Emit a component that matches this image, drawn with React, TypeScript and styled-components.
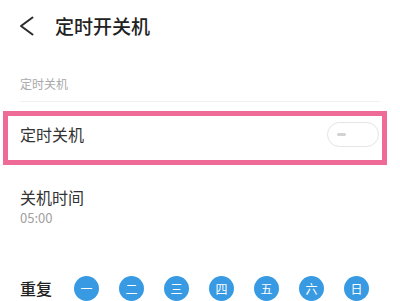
import React from "react";
import styled, { createGlobalStyle } from "styled-components";

const Global = createGlobalStyle`
  html, body { margin: 0; padding: 0; background: #ffffff; }
  body { font-family: "Noto Sans CJK SC", "Noto Sans", Roboto, sans-serif; }
`;

const Page = styled.div`
  width: 400px;
  height: 301px;
  overflow: hidden;
  background: #fff;
  display: flex;
  flex-direction: column;
`;

const Header = styled.div`
  height: 52px;
  display: flex;
  align-items: center;
  padding-left: 19px;
`;

const BackIcon = styled.svg`
  width: 16px;
  height: 20px;
  flex: none;
`;

const Title = styled.div`
  margin-left: 20px;
  font-size: 19px;
  line-height: 26px;
  font-weight: 500;
  color: #222;
`;

const SectionLabel = styled.div`
  margin: 25px 0 0 20px;
  font-size: 12px;
  line-height: 16px;
  color: #aaa;
`;

const Divider = styled.div`
  margin: 9px 20px 0 20px;
  height: 1px;
  background: #f0f0f0;
`;

const Highlight = styled.div`
  margin: 9px 0 0 3px;
  width: 384px;
  height: 55px;
  box-sizing: border-box;
  border: 5px solid #ef6b97;
  display: flex;
  align-items: center;
  justify-content: space-between;
  padding: 0 3px 8px 12px;
`;

const RowTitle = styled.div`
  font-size: 16px;
  line-height: 22px;
  color: #333;
`;

const Toggle = styled.div`
  width: 52px;
  height: 25px;
  box-sizing: border-box;
  border: 1.5px solid #e4e4e4;
  border-radius: 13px;
  display: flex;
  align-items: center;
  padding-left: 9px;
`;

const ToggleDash = styled.div`
  width: 9px;
  height: 3px;
  border-radius: 2px;
  background: #d2d2d2;
`;

const TimeRow = styled.div`
  margin: 21px 0 0 20px;
  display: flex;
  flex-direction: column;
  gap: 2px;
`;

const SubText = styled.div`
  font-size: 13px;
  line-height: 16px;
  color: #a0a0a0;
`;

const RepeatRow = styled.div`
  margin: 49px 0 0 20px;
  height: 26px;
  display: flex;
  align-items: center;
`;

const RepeatLabel = styled.div`
  font-size: 16px;
  line-height: 22px;
  font-weight: 500;
  color: #222;
  margin-right: 22px;
`;

const Days = styled.div`
  display: flex;
  gap: 20px;
`;

const Day = styled.div`
  width: 25px;
  height: 25px;
  border-radius: 50%;
  background: #389ae2;
  color: #fff;
  font-size: 12px;
  line-height: 25px;
  text-align: center;
`;

const days = ["一", "二", "三", "四", "五", "六", "日"];

export default function App() {
  return (
    <Page>
      <Global />
      <Header>
        <BackIcon viewBox="0 0 16 20">
          <polyline points="13.5,1.5 2,10 13.5,18.5" fill="none" stroke="#2a2a2a" strokeWidth="2" strokeLinecap="round" strokeLinejoin="round" />
        </BackIcon>
        <Title>定时开关机</Title>
      </Header>
      <SectionLabel>定时关机</SectionLabel>
      <Divider />
      <Highlight>
        <RowTitle>定时关机</RowTitle>
        <Toggle>
          <ToggleDash />
        </Toggle>
      </Highlight>
      <TimeRow>
        <RowTitle>关机时间</RowTitle>
        <SubText>05:00</SubText>
      </TimeRow>
      <RepeatRow>
        <RepeatLabel>重复</RepeatLabel>
        <Days>
          {days.map((d) => (
            <Day key={d}>{d}</Day>
          ))}
        </Days>
      </RepeatRow>
    </Page>
  );
}
